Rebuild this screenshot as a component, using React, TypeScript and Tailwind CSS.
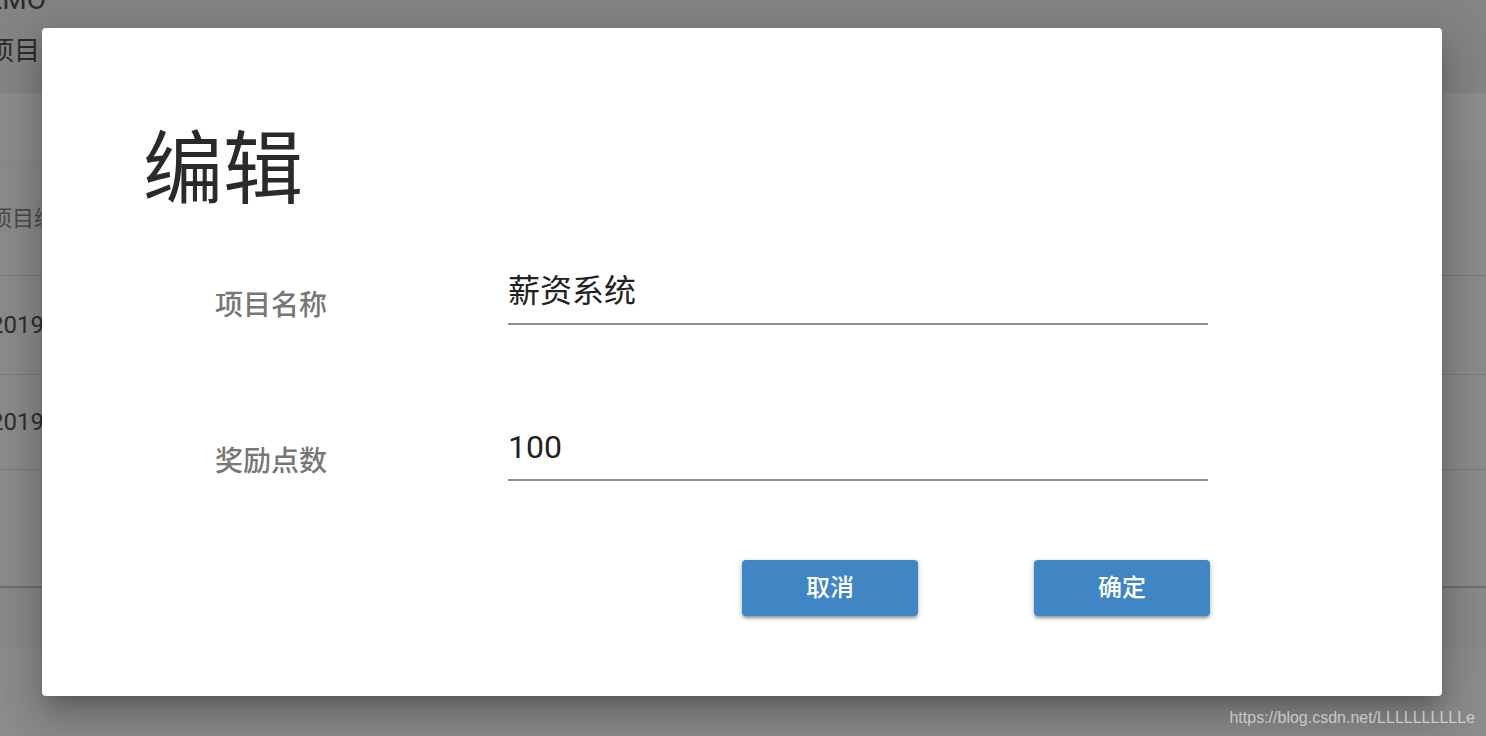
import React from "react";

const cjk = "font-['Roboto','Noto_Sans_CJK_SC',sans-serif]";

const BackgroundPage: React.FC = () => {
  const rows = [
    { h: "h-[69px]", bg: "bg-[#8d8d8d]", line: "border-b border-[#858585]", text: "" },
    { h: "h-[114px]", bg: "bg-[#8b8b8b]", line: "border-b border-[#777777]", text: "项目编号", tone: "text-[#4a4a4a] text-[22px]" },
    { h: "h-[99px]", bg: "bg-[#8b8b8b]", line: "border-b border-[#7a7a7a]", text: "2019-05-01", tone: "text-[#2e2e2e] text-[24px]" },
    { h: "h-[95px]", bg: "bg-[#8b8b8b]", line: "border-b border-[#7a7a7a]", text: "2019-05-02", tone: "text-[#2e2e2e] text-[24px]" },
    { h: "h-[118px]", bg: "bg-[#8b8b8b]", line: "border-b-2 border-[#6e6e6e]", text: "" },
    { h: "h-[60px]", bg: "bg-[#898989]", line: "", text: "" },
  ];

  return (
    <div className="flex flex-col">
      <div className="h-[93px] bg-[#838483] flex flex-col overflow-hidden">
        <span className="-mt-[16px] -ml-[32px] text-[28px] leading-[32px] text-[#2c2c2c] whitespace-nowrap">
          DEMO
        </span>
        <span className="mt-[20px] -ml-[12px] text-[26px] leading-[30px] text-[#2c2c2c] whitespace-nowrap">
          项目列表
        </span>
      </div>
      {rows.map((row, idx) => (
        <div
          key={idx}
          className={`${row.h} ${row.bg} ${row.line} flex items-center overflow-hidden`}
        >
          {row.text && (
            <span className={`-ml-[10px] whitespace-nowrap ${row.tone}`}>{row.text}</span>
          )}
        </div>
      ))}
      <div className="flex-1 bg-[#8f8f8f]" />
    </div>
  );
};

const Field: React.FC<{ label: string; value: string }> = ({ label, value }) => (
  <div className="flex items-end">
    <div className="w-[293px] pb-[5px] text-[28px] leading-[28px] font-medium text-[#777777]">
      {label}
    </div>
    <div className="w-[700px] h-[50px] border-b-2 border-[#909090] text-[32px] leading-[32px] text-[#222222]">
      {value}
    </div>
  </div>
);

const buttonClass =
  "w-[176px] h-[56px] rounded-[4px] bg-[#4186c4] text-white text-[24px] font-medium shadow-[0_3px_3px_-1px_rgba(0,0,0,0.25),0_2px_4px_0_rgba(0,0,0,0.16),0_1px_6px_0_rgba(0,0,0,0.12)]";

const App: React.FC = () => {
  return (
    <div className={`relative w-[1486px] h-[736px] overflow-hidden bg-[#8c8c8c] ${cjk}`}>
      <div className="h-full flex flex-col">
        <BackgroundPage />
      </div>

      <div className="absolute inset-0 flex pl-[42px] pt-[28px]">
        <div className="w-[1400px] h-[668px] bg-white rounded-[4px] shadow-[0_11px_15px_-7px_rgba(0,0,0,0.2),0_24px_38px_3px_rgba(0,0,0,0.14),0_9px_46px_8px_rgba(0,0,0,0.12)] flex flex-col pt-[102px]">
          <h2 className="ml-[101px] text-[80px] leading-[80px] text-[#2a2a2a]">编辑</h2>

          <div className="ml-[173px] mt-[65px] flex flex-col gap-[106px]">
            <Field label="项目名称" value="薪资系统" />
            <Field label="奖励点数" value="100" />
          </div>

          <div className="ml-[700px] mt-[79px] flex gap-[116px]">
            <button className={buttonClass}>取消</button>
            <button className={buttonClass}>确定</button>
          </div>
        </div>
      </div>

      <div className="absolute right-[11px] bottom-[9px] text-[16px] leading-[18px] text-white/60 font-['Liberation_Sans',sans-serif]">
        https://blog.csdn.net/LLLLLLLLLLe
      </div>
    </div>
  );
};

export default App;
